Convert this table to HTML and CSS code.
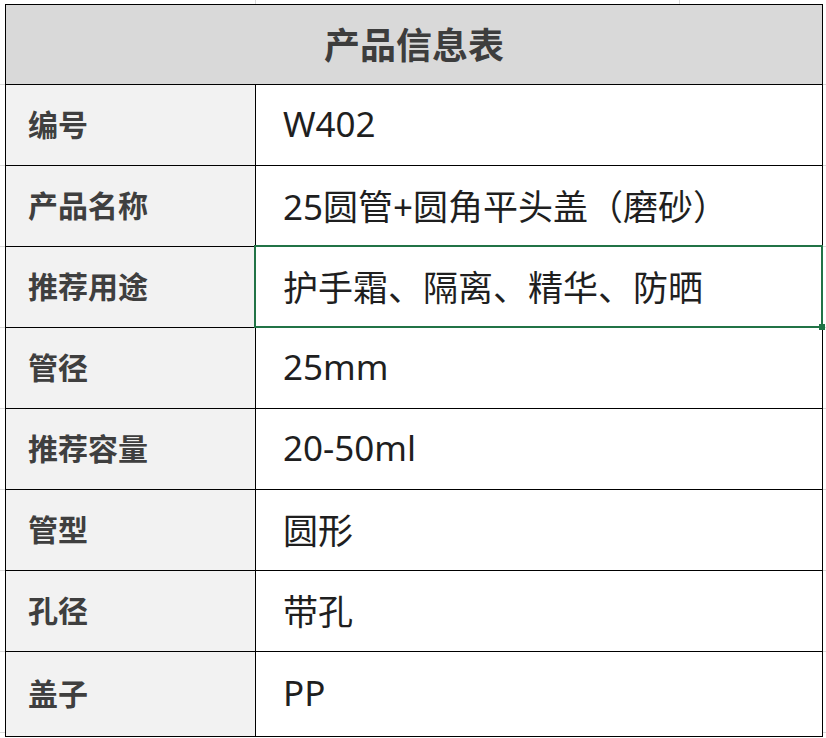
FILE: index.html
```html
<!DOCTYPE html>
<html lang="zh-CN">
<head>
<meta charset="utf-8">
<title>产品信息表</title>
<link rel="stylesheet" href="styles.css">
</head>
<body>
<div class="sheet">
  <div class="info">
    <div class="title">产品信息表</div>
    <div class="label">编号</div><div class="value">W402</div>
    <div class="label">产品名称</div><div class="value">25圆管+圆角平头盖（磨砂）</div>
    <div class="label">推荐用途</div><div class="value selected">护手霜、隔离、精华、防晒</div>
    <div class="label">管径</div><div class="value">25mm</div>
    <div class="label">推荐容量</div><div class="value">20-50ml</div>
    <div class="label">管型</div><div class="value">圆形</div>
    <div class="label">孔径</div><div class="value">带孔</div>
    <div class="label">盖子</div><div class="value">PP</div>
  </div>
</div>
</body>
</html>
```

FILE: styles.css
```css
html, body {
  margin: 0;
  padding: 0;
  background: #ffffff;
}

body {
  width: 826px;
  height: 738px;
  overflow: hidden;
}

.sheet {
  width: 826px;
  height: 738px;
  box-sizing: border-box;
  padding: 4px 0 0 5px;
  background-color: #ffffff;
  background-image:
    repeating-linear-gradient(to bottom, #dadada 0 1px, transparent 1px 81px),
    linear-gradient(#dadada, #dadada),
    linear-gradient(#dadada, #dadada);
  background-size: 100% 660px, 1px 4px, 1px 4px;
  background-position: 0 84px, 255px 0, 679px 0;
  background-repeat: no-repeat;
}

.info {
  display: grid;
  grid-template-columns: 250px 567px;
  grid-template-rows: 80px repeat(7, 81px) 85px;
  width: 818px;
  box-sizing: border-box;
  border-top: 1px solid #000;
  border-left: 1px solid #000;
  font-family: "Noto Sans CJK SC", sans-serif;
}

.info > div {
  box-sizing: border-box;
  border-right: 1px solid #000;
  border-bottom: 1px solid #000;
  display: flex;
  align-items: center;
  padding-bottom: 4px;
}

.title {
  grid-column: 1 / 3;
  justify-content: center;
  background: #d9d9d9;
  color: #3d3d3d;
  font-size: 36px;
  font-weight: 700;
}

.label {
  background: #f2f2f2;
  color: #3f3f3f;
  font-size: 30px;
  font-weight: 700;
  padding-left: 22px;
}

.value {
  background: #ffffff;
  color: #1f1f1f;
  font-family: "Noto Sans", "Noto Sans CJK SC", sans-serif;
  font-size: 35px;
  padding-left: 27px;
}

.selected {
  position: relative;
}

.selected::after {
  content: "";
  position: absolute;
  left: -2px;
  top: -2px;
  right: -1px;
  bottom: -1px;
  border: 2px solid #217346;
  z-index: 2;
}

.selected::before {
  content: "";
  position: absolute;
  right: -3px;
  bottom: -3px;
  width: 6px;
  height: 6px;
  background: #217346;
  z-index: 3;
}
```
